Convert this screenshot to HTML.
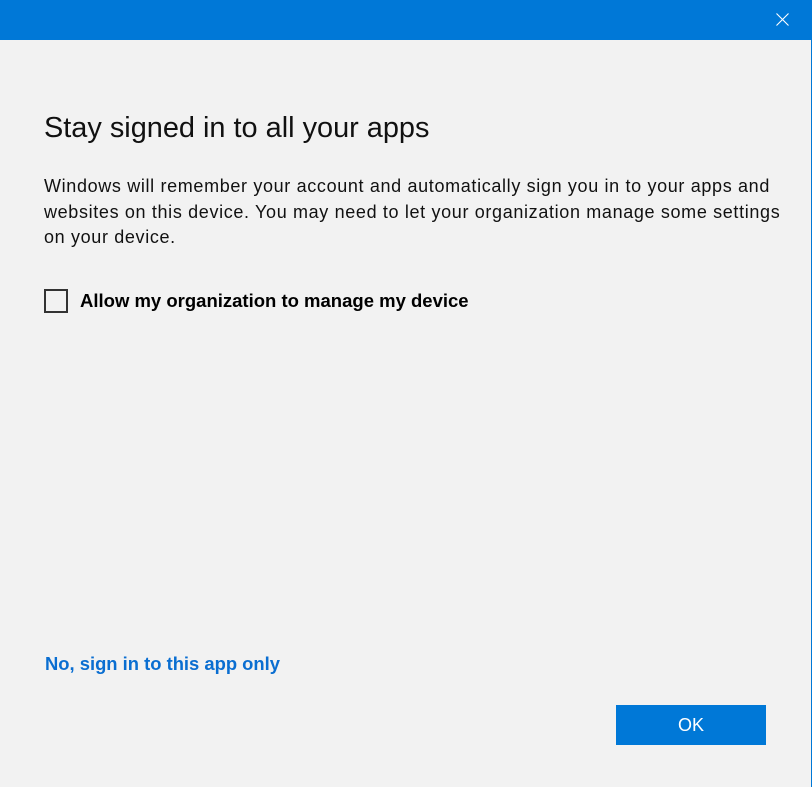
<!DOCTYPE html>
<html><head><style>
html,body{margin:0;padding:0}
body{width:812px;height:787px;background:#f2f2f2;position:relative;overflow:hidden;font-family:"Liberation Sans",sans-serif;color:#000}
.bar{position:absolute;left:0;top:0;width:812px;height:40px;background:#0078d7}
.rb{position:absolute;right:0;top:0;width:1px;height:787px;background:#0078d7}
.x{position:absolute;left:776px;top:13px}
h1{position:absolute;left:44px;top:112px;margin:0;font-weight:normal;font-size:28.9px;white-space:nowrap;color:#111}
.p{position:absolute;left:44px;top:174px;width:768px;font-size:18px;letter-spacing:0.65px;line-height:25.5px;color:#111;white-space:nowrap}
.cb{position:absolute;left:44px;top:289px;width:20px;height:20px;border:2px solid #333}
.lbl{position:absolute;left:80px;top:290px;font-weight:bold;font-size:18.5px;white-space:nowrap}
.link{position:absolute;left:45px;top:653px;font-weight:bold;font-size:18.4px;color:#0a6ed1;white-space:nowrap}
.ok{position:absolute;left:616px;top:705px;width:150px;height:40px;background:#0078d7;color:#fff;font-size:18px;text-align:center;line-height:40px}
</style></head><body>
<div class="bar"></div><div class="rb"></div>
<svg class="x" width="13" height="13" viewBox="0 0 13 13"><path d="M0.5 0.5L12.5 12.5M12.5 0.5L0.5 12.5" stroke="#fff" stroke-width="1.1"/></svg>
<h1>Stay signed in to all your apps</h1>
<div class="p">Windows will remember your account and automatically sign you in to your apps and<br>websites on this device. You may need to let your organization manage some settings<br>on your device.</div>
<div class="cb"></div>
<div class="lbl">Allow my organization to manage my device</div>
<div class="link">No, sign in to this app only</div>
<div class="ok">OK</div>
</body></html>
